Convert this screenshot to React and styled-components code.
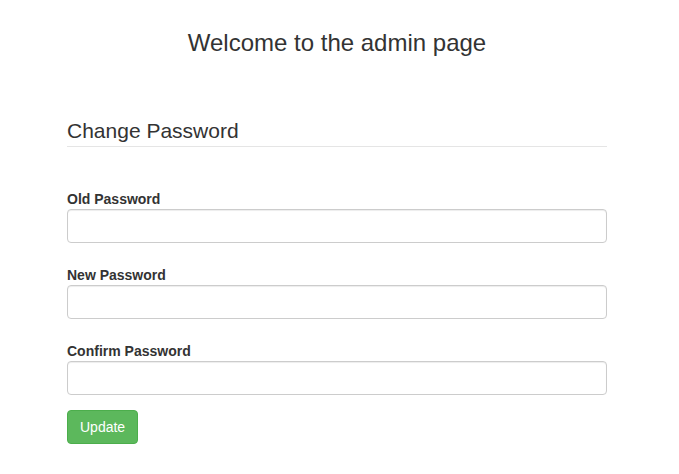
import React from "react";
import styled, { createGlobalStyle } from "styled-components";

const GlobalStyle = createGlobalStyle`
  html, body {
    margin: 0;
    padding: 0;
    background: #fff;
  }
  body {
    font-family: "Liberation Sans", Arial, Helvetica, sans-serif;
    font-size: 14px;
    line-height: 1.42857143;
    color: #333;
  }
  * { box-sizing: border-box; }
`;

const Page = styled.div`
  width: 540px;
  margin-left: 67px;
  padding-top: 30px;
`;

const Title = styled.h3`
  margin: 0 0 60px;
  font-size: 24px;
  font-weight: 500;
  line-height: 26.4px;
  text-align: center;
  color: #333;
`;

const Form = styled.form`
  display: flex;
  flex-direction: column;
  align-items: flex-start;
`;

const Legend = styled.div`
  width: 100%;
  font-size: 21px;
  line-height: 30px;
  color: #333;
  border-bottom: 1px solid #e5e5e5;
  margin-bottom: 42px;
`;

const FieldGroup = styled.div`
  width: 100%;
  margin-bottom: ${(p) => (p.$last ? "15px" : "22px")};
`;

const Label = styled.label`
  display: block;
  font-weight: bold;
  line-height: 20px;
  margin: 0;
`;

const Input = styled.input`
  display: block;
  width: 100%;
  height: 34px;
  padding: 6px 12px;
  font-family: inherit;
  font-size: 14px;
  line-height: 20px;
  color: #555;
  background: #fff;
  border: 1px solid #ccc;
  border-radius: 4px;
  box-shadow: inset 0 1px 1px rgba(0, 0, 0, 0.075);
  outline: none;
`;

const Button = styled.button`
  display: inline-block;
  padding: 6px 12px;
  font-family: inherit;
  font-size: 14px;
  line-height: 20px;
  color: #fff;
  background-color: #5cb85c;
  border: 1px solid #4cae4c;
  border-radius: 4px;
  cursor: pointer;
`;

const fields = ["Old Password", "New Password", "Confirm Password"];

export default function App() {
  return (
    <>
      <GlobalStyle />
      <Page>
        <Title>Welcome to the admin page</Title>
        <Form onSubmit={(e) => e.preventDefault()}>
          <Legend>Change Password</Legend>
          {fields.map((f, i) => (
            <FieldGroup key={f} $last={i === fields.length - 1}>
              <Label>{f}</Label>
              <Input type="password" />
            </FieldGroup>
          ))}
          <Button type="submit">Update</Button>
        </Form>
      </Page>
    </>
  );
}
